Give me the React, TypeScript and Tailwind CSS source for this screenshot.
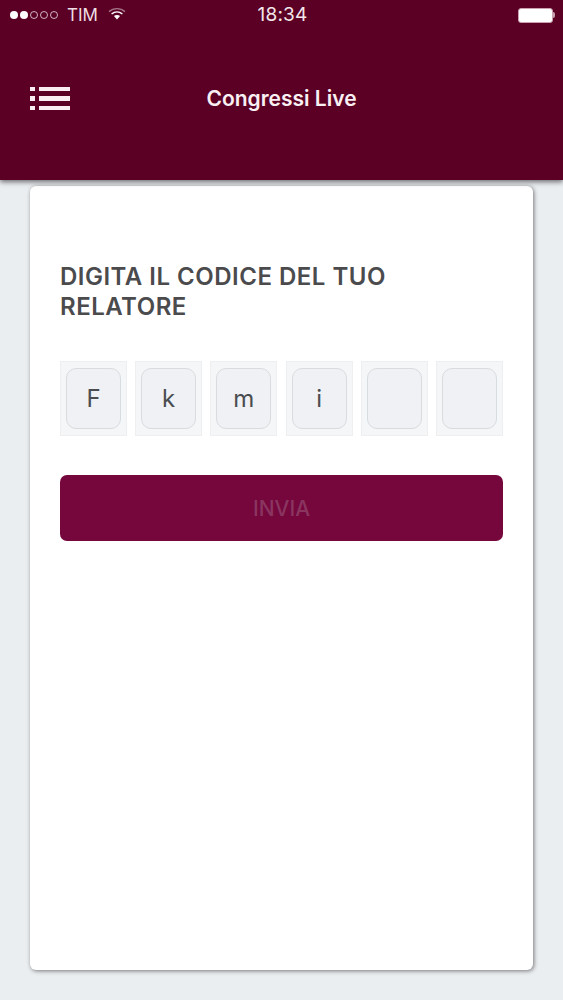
const code = [
  { char: 'F' },
  { char: 'k' },
  { char: 'm' },
  { char: 'i' },
  { char: '' },
  { char: '' },
];

function WifiIcon() {
  return (
    <svg width="18" height="13" viewBox="0 0 18 13" fill="none" className="ml-[10px] mt-[-4px]">
      <path d="M1 4.6C5.6 0.6 12.4 0.6 17 4.6" stroke="#fff" strokeOpacity="0.45" strokeWidth="1.4" />
      <path d="M3.6 7C6.8 4.4 11.2 4.4 14.4 7" stroke="#fff" strokeWidth="1.5" />
      <path d="M9 12.4L5.9 9.1C7.8 7.7 10.2 7.7 12.1 9.1L9 12.4Z" fill="#fff" />
    </svg>
  );
}

function MenuIcon() {
  return (
    <svg width="40" height="23" viewBox="0 0 40 23" fill="#fbeef2">
      <rect x="0" y="0" width="5" height="4" />
      <rect x="9" y="0" width="31" height="4" />
      <rect x="0" y="9" width="5" height="5" />
      <rect x="9" y="9" width="31" height="5" />
      <rect x="0" y="19" width="5" height="4" />
      <rect x="9" y="19" width="31" height="4" />
    </svg>
  );
}

export default function App() {
  return (
    <div className="h-[1000px] w-[563px] overflow-hidden bg-[#ebeef1] font-['Inter','Liberation_Sans',sans-serif]">
      {/* Header */}
      <header className="relative z-10 h-[180px] bg-[#5b0024] shadow-[0_2px_5px_rgba(0,0,0,0.55)]">
        {/* Status bar */}
        <div className="grid h-[30px] grid-cols-[1fr_auto_1fr] items-center pl-[10px] pr-[8px] text-white">
          <div className="flex items-center">
            <div className="flex items-center gap-[2px]">
              <span className="h-[8px] w-[8px] rounded-full bg-white" />
              <span className="h-[8px] w-[8px] rounded-full bg-white" />
              <span className="h-[8px] w-[8px] rounded-full border border-white/70" />
              <span className="h-[8px] w-[8px] rounded-full border border-white/70" />
              <span className="h-[8px] w-[8px] rounded-full border border-white/70" />
            </div>
            <span className="ml-[9px] text-[17px] font-normal leading-none text-[#efdfe5]">TIM</span>
            <WifiIcon />
          </div>
          <span className="text-[19px] font-normal leading-[20px] tracking-[0.2px] text-[#f3e7eb]">18:34</span>
          <div className="flex items-center justify-end">
            <div className="h-[15px] w-[35px] rounded-[3px] border border-[#c9a0b0] bg-white" />
            <div className="h-[6px] w-[2px] rounded-r-sm bg-[#c9a0b0]" />
          </div>
        </div>
        {/* Title row */}
        <div className="grid h-[137px] grid-cols-[1fr_auto_1fr] items-center px-[30px]">
          <MenuIcon />
          <h1 className="text-[21px] font-semibold leading-none text-[#f9f0f3]">Congressi Live</h1>
        </div>
      </header>

      {/* Card */}
      <main className="ml-[30px] mt-[6px] h-[784px] w-[503px] rounded-[6px] bg-white px-[30px] pt-[76px] shadow-[1px_1px_4px_rgba(0,0,0,0.5)]">
        <h2 className="text-[24px] font-semibold leading-[30px] tracking-[0.5px] text-[#4b4b4d]">
          DIGITA IL CODICE DEL TUO
          <br />
          RELATORE
        </h2>

        <div className="mt-[39px] flex w-[443px] justify-between">
          {code.map((item, i) => (
            <div key={i} className="flex h-[75px] w-[67px] items-center justify-center border border-[#edeff0] bg-[#f5f6f7]">
              <div className="flex h-[61px] w-[55px] items-center justify-center rounded-[10px] border border-[#d9dcdf] bg-[#eff1f4] text-[24px] leading-none text-[#4a4d50]">
                {item.char}
              </div>
            </div>
          ))}
        </div>

        <button className="mt-[39px] flex h-[66px] w-[443px] items-center justify-center rounded-[7px] bg-[#75073d] pt-[2px] text-[21px] font-medium text-[#8a3560]">
          INVIA
        </button>
      </main>
    </div>
  );
}
